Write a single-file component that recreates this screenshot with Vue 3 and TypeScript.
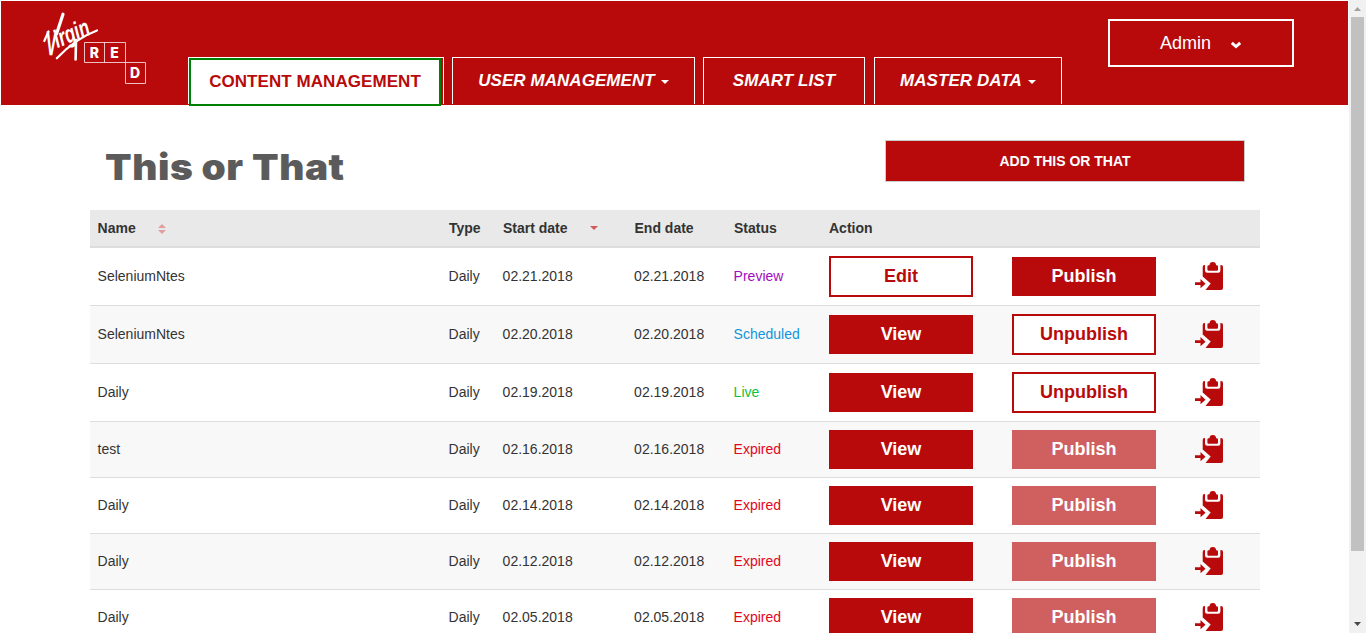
<script setup lang="ts">
type Status = 'Preview' | 'Scheduled' | 'Live' | 'Expired'

interface Entry {
  name: string
  type: string
  start: string
  end: string
  status: Status
}

interface Tab {
  label: string
  id: string
  menu: boolean
}

const tabs: Tab[] = [
  { label: 'CONTENT MANAGEMENT', id: 'content', menu: false },
  { label: 'USER MANAGEMENT', id: 'user', menu: true },
  { label: 'SMART LIST', id: 'smart', menu: false },
  { label: 'MASTER DATA', id: 'master', menu: true },
]

const entry = (name: string, date: string, status: Status): Entry => ({
  name,
  type: 'Daily',
  start: date,
  end: date,
  status,
})

const entries: Entry[] = [
  entry('SeleniumNtes', '02.21.2018', 'Preview'),
  entry('SeleniumNtes', '02.20.2018', 'Scheduled'),
  entry('Daily', '02.19.2018', 'Live'),
  entry('test', '02.16.2018', 'Expired'),
  entry('Daily', '02.14.2018', 'Expired'),
  entry('Daily', '02.12.2018', 'Expired'),
  entry('Daily', '02.05.2018', 'Expired'),
]

const canUnpublish = (s: Status): boolean => s === 'Scheduled' || s === 'Live'
</script>

<template>
  <div class="window">
    <div class="page">
      <header class="header">
        <svg class="logo" width="110" height="80" viewBox="40 8 110 80">
          <g fill="#fff" font-family="'Liberation Sans', Arial, sans-serif" font-style="italic" font-weight="bold">
            <text transform="translate(46.500 55.500) rotate(-3) scale(.46 1)" font-size="35">V</text>
            <text transform="translate(57.500 48) rotate(-22) scale(.68 1)" font-size="25">irgin</text>
          </g>
          <g fill="none" stroke="#fff" stroke-linecap="round">
            <path d="M56.800 58.300C67 47.500 82 36 97 30.500" stroke-width="2.200" />
            <path d="M76 40L75.600 59.500" stroke-width="2.600" />
            <path d="M44.300 41L48.500 31.500" stroke-width="2.200" />
            <path d="M56.500 34L63 14.200" stroke-width="3.200" />
          </g>
          <g fill="none" stroke="#fff" stroke-opacity=".75">
            <path d="M84.500 42.500H125.500V62.500H84.500ZM104.500 42.500V62.500M125.500 62.500H145.500V83.500H125.500Z" />
          </g>
          <g fill="#fff" font-family="Inter, sans-serif" font-size="14" font-weight="800" text-anchor="middle">
            <text x="94.500" y="58.200">R</text>
            <text x="114.500" y="58.200">E</text>
            <text x="135" y="78.200">D</text>
          </g>
        </svg>
        <nav class="tabs">
          <a v-for="t in tabs" :key="t.id" class="tab" :class="`tab-${t.id}`">
            <span class="tab-label">{{ t.label }}</span>
            <svg v-if="t.menu" class="caret" width="8" height="4" viewBox="0 0 8 4"><path d="M0 0H8L4 4Z" fill="#fff" /></svg>
          </a>
        </nav>
        <button class="admin">
          <span>Admin</span>
          <svg width="12" height="8" viewBox="0 0 12 8"><path d="M1.800 1.800L6 5.600L10.200 1.800" fill="none" stroke="#fff" stroke-width="2.900" /></svg>
        </button>
      </header>

      <main class="main">
        <div class="title-bar">
          <h1>This or That</h1>
          <button class="add">ADD THIS OR THAT</button>
        </div>

        <div class="table">
          <div class="row head">
            <div class="name-head">
              Name
              <svg width="8" height="10" viewBox="0 0 8 10"><path d="M0 4L4 0L8 4ZM0 6H8L4 10Z" fill="#df9f9f" /></svg>
            </div>
            <div>Type</div>
            <div class="start-head">
              Start date
              <svg width="8" height="4" viewBox="0 0 8 4"><path d="M0 0H8L4 4Z" fill="#d05a5a" /></svg>
            </div>
            <div>End date</div>
            <div>Status</div>
            <div>Action</div>
          </div>
          <div v-for="e in entries" :key="e.start" class="row item">
            <div>{{ e.name }}</div>
            <div>{{ e.type }}</div>
            <div>{{ e.start }}</div>
            <div>{{ e.end }}</div>
            <div :class="e.status.toLowerCase()">{{ e.status }}</div>
            <div>
              <button v-if="e.status === 'Preview'" class="btn outline">Edit</button>
              <button v-else class="btn">View</button>
            </div>
            <div>
              <button v-if="canUnpublish(e.status)" class="btn outline">Unpublish</button>
              <button v-else class="btn" :class="{ faded: e.status === 'Expired' }">Publish</button>
            </div>
            <div>
              <svg class="copy" width="28" height="28" viewBox="0 0 28 28" fill="#b80a0a">
                <path d="M9.500 3H10V8.500Q10 10.700 12.200 10.700H23.200Q25.400 10.700 25.400 8.500V3H26Q28 3 28 5V26Q28 28 26 28H10.500L15.700 21.500L7.700 14.500V5Q7.700 3 9.500 3Z" />
                <path d="M12.400 4.500Q12.400 3.200 13.700 3.200H14.500Q14.800 0 17.800 0Q20.800 0 21.100 3.200H21.800Q23 3.200 23 4.500V7.500Q23 8.700 21.800 8.700H13.600Q12.400 8.700 12.400 7.500Z" />
                <path d="M0 20.300H5.500V17.100L10.500 21.700L5.500 26.200V23H0Z" />
              </svg>
            </div>
          </div>
        </div>
      </main>
    </div>
    <aside class="scrollbar">
      <svg width="7" height="4" viewBox="0 0 7 4"><path d="M0 4L3.500 0L7 4Z" fill="#a0a0a0" /></svg>
      <div class="thumb"></div>
      <svg class="down" width="7" height="4" viewBox="0 0 7 4"><path d="M0 0H7L3.500 4Z" fill="#484848" /></svg>
    </aside>
  </div>
</template>

<style>
body {
  overflow: hidden;
}
</style>

<style scoped>
.window {
  display: flex;
  width: 1366px;
  height: 633px;
  overflow: hidden;
  background: #fff;
  color: #333;
  font: 14px/20px 'Liberation Sans', Arial, sans-serif;
}
.window * {
  box-sizing: border-box;
}
svg {
  display: block;
  flex: none;
}
button {
  padding: 0;
  border: 0;
  font-family: inherit;
}
.page {
  width: 1349px;
  height: 633px;
  padding: 1px 1px 0;
  overflow: hidden;
}
.header {
  display: flex;
  height: 104px;
  background: #b80a0a;
}
.logo {
  margin: 7px 0 0 39px;
}
.tabs {
  display: flex;
  gap: 8px;
  margin: 56px 0 0 38px;
}
.tab {
  display: flex;
  align-items: center;
  justify-content: center;
  height: 47px;
  border: 1px solid #fff;
  border-bottom: 0;
  color: #fff;
  font-size: 17px;
  font-style: italic;
  font-weight: bold;
  letter-spacing: 0.06px;
}
.caret {
  margin: 2px 0 0 6px;
}
.tab-content {
  align-items: flex-start;
  justify-content: flex-start;
  width: 256px;
  font-style: normal;
}
.tab-content .tab-label {
  flex: none;
  width: 252px;
  height: 48px;
  border: 2px solid #008000;
  background: #fff;
  color: #b80a0a;
  line-height: 43px;
  text-align: center;
}
.tab-user {
  width: 243px;
}
.tab-smart {
  width: 162px;
}
.tab-master {
  width: 188px;
  margin-left: 1px;
}
.admin {
  display: flex;
  align-items: center;
  width: 186px;
  height: 48px;
  margin: 18px 0 0 46px;
  padding-left: 50px;
  gap: 19px;
  border: 2px solid #fff;
  background: transparent;
  color: #fff;
  font-size: 18px;
}
.admin svg {
  margin-top: 3px;
}
.main {
  width: 1170px;
  margin: 35px 0 0 89px;
}
.title-bar {
  display: flex;
  justify-content: space-between;
  height: 70px;
  padding: 0 15px;
}
h1 {
  margin: 5px 0 0;
  color: #5b5b5b;
  font: 900 36px/44px Inter, 'Arial Black', sans-serif;
  letter-spacing: 0.5px;
  white-space: nowrap;
  transform: scaleX(1.078);
  transform-origin: left;
}
.add {
  width: 360px;
  height: 42px;
  border: 1px solid #ccc;
  background: #b80a0a;
  color: #fff;
  font-size: 14px;
  font-weight: bold;
}
.row {
  display: grid;
  grid-template-columns: 351px 54px 131.5px 99.5px 95px 183px 183px 73px;
  align-items: center;
}
.row > div {
  padding-left: 7.6px;
}
.head {
  height: 38px;
  border-bottom: 2px solid #ddd;
  background: #e9e9e9;
  font-weight: bold;
}
.name-head,
.start-head {
  display: flex;
  align-items: center;
  gap: 22px;
}
.name-head svg {
  margin: 2px 0 0 0.5px;
}
.row.head > :nth-child(n + 2) {
  padding-left: 8px;
}
.item {
  padding: 8px 0;
  border-bottom: 1px solid #ddd;
}
.item:nth-child(odd) {
  background: #f8f8f8;
}
.item > div:nth-child(-n + 5) {
  padding-bottom: 2px;
}
.item > div:nth-child(n + 6) {
  padding-left: 8px;
}
.item > div:last-child {
  padding: 0 0 1px 8.4px;
}
.preview {
  color: #a30cbd;
}
.scheduled {
  color: #1295d8;
}
.live {
  color: #0dc143;
}
.expired {
  color: #e2061c;
}
.btn {
  display: block;
  width: 144px;
  height: 39px;
  background: #b80a0a;
  color: #fff;
  font-size: 18px;
  font-weight: bold;
}
.outline {
  height: 41px;
  border: 2px solid #b80a0a;
  background: #fff;
  color: #b80a0a;
}
.faded {
  background: #d06060;
}
.scrollbar {
  display: flex;
  flex-direction: column;
  align-items: center;
  width: 17px;
  height: 633px;
  padding: 7px 0;
  background: #f1f1f1;
}
.thumb {
  width: 13px;
  height: 534px;
  margin-top: 6px;
  background: #c1c1c1;
}
.down {
  margin-top: auto;
}
</style>
